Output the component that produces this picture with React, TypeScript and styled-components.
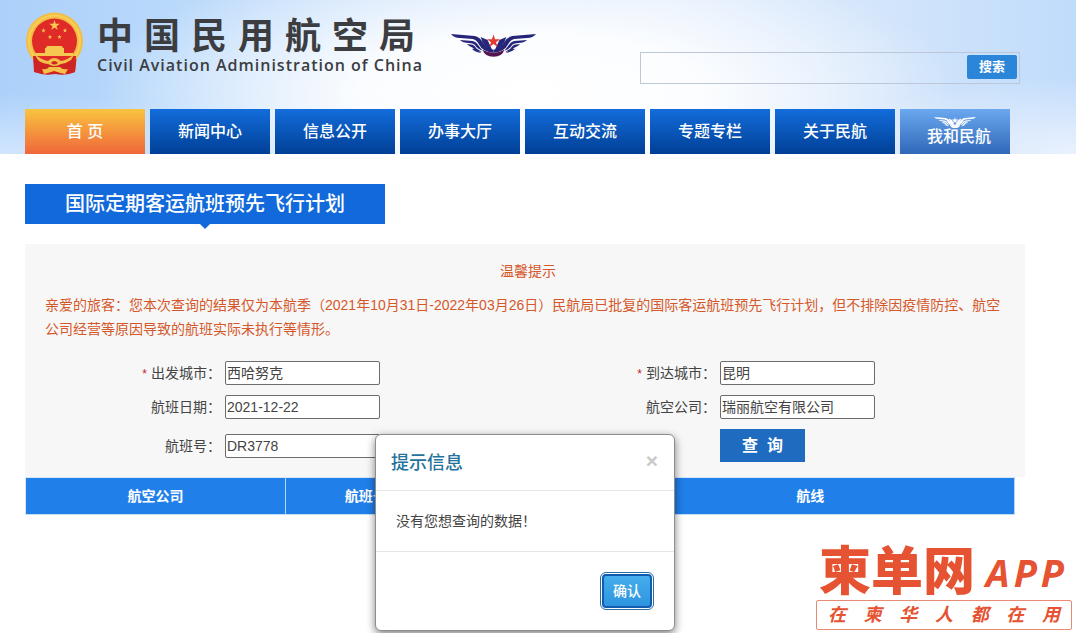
import React from 'react';
import styled, { createGlobalStyle } from 'styled-components';

const GlobalStyle = createGlobalStyle`
  *, *::before, *::after { box-sizing: border-box; }
  body {
    margin: 0;
    background: #fff;
    color: #444;
    font: 14px/24px "Liberation Sans", "Noto Sans CJK SC", sans-serif;
  }
  button, input { font: inherit; color: inherit; }
`;

const Page = styled.div`
  position: relative;
  min-height: 100vh;
  overflow: hidden;
`;

const Header = styled.header`
  padding: 12px 51px 0 25px;
  background:
    radial-gradient(ellipse 40% 95% at 49% 60%, #ffffff 0%, rgba(255, 255, 255, 0.9) 40%, rgba(255, 255, 255, 0) 100%),
    radial-gradient(ellipse 26% 40% at 0% 100%, rgba(225, 239, 255, 0.7), rgba(225, 239, 255, 0)),
    radial-gradient(ellipse 24% 50% at 100% 100%, rgba(238, 244, 254, 0.9), rgba(238, 244, 254, 0)),
    linear-gradient(90deg, #acd0fa 0%, #bbdafb 18%, #cfe3fc 38%, #dfecfd 62%, #d3e5fb 82%, #c0dcfb 100%);
`;

const Masthead = styled.div`
  display: flex;
  align-items: flex-start;
  height: 97px;
`;

const Emblem = styled.svg`
  flex: none;
  width: 60px;
  height: 64px;
`;

const Names = styled.div`
  flex: none;
  width: 322px;
  margin-left: 12px;
  color: #3c3d41;
  white-space: nowrap;
`;

const SiteName = styled.h1`
  display: flex;
  gap: 11px;
  margin: 6px 0 0;
  font-size: 36px;
  line-height: 38px;
  font-weight: 700;
`;

const EnglishName = styled.p`
  margin: 0;
  font: 600 16px/18px "Open Sans", sans-serif;
  letter-spacing: 1px;
`;

const Wings = styled.svg<{ $width: number }>`
  display: block;
  flex: none;
  width: ${p => p.$width}px;
`;

const WingsHolder = styled.div`
  margin: 22px 0 0 32px;
`;

const Search = styled.form`
  display: flex;
  width: 380px;
  height: 32px;
  margin: 40px 5px 0 auto;
  padding: 2px;
  border: 1px solid #bec7d8;
`;

const SearchInput = styled.input`
  flex: 1;
  min-width: 0;
  border: 0;
  background: transparent;
`;

const SearchButton = styled.button`
  width: 50px;
  height: 24px;
  padding: 0;
  border: 0;
  border-radius: 2px;
  background: #2b86d9;
  color: #fff;
  font-size: 13px;
  font-weight: 700;
`;

const Nav = styled.nav`
  display: grid;
  grid-template-columns: repeat(7, 12fr) 11fr;
  gap: 5px;
  margin-right: 15px;
`;

const tones = {
  home: 'linear-gradient(#f9c440, #f0663a)',
  normal: 'linear-gradient(#136ddb, #003f96)',
  light: 'linear-gradient(#6ba8ef, #3068b9)',
};

const NavLink = styled.a<{ $tone: keyof typeof tones }>`
  display: flex;
  flex-direction: column;
  align-items: center;
  justify-content: center;
  height: 45px;
  background: ${p => tones[p.$tone]};
  color: #fff;
  font-size: 16px;
  line-height: 18px;
  font-weight: 500;
  text-decoration: none;
  white-space: pre;
`;

const WingedLabel = styled.span`
  padding-left: 8px;
`;

const Main = styled.main`
  position: relative;
  margin: 30px 51px 0 25px;
`;

const Title = styled.h2`
  position: relative;
  width: fit-content;
  margin: 0 0 20px;
  padding: 0 40px;
  background: #1169db;
  color: #fff;
  font-size: 20px;
  line-height: 40px;
  font-weight: 500;

  &::after {
    content: "";
    position: absolute;
    top: 100%;
    left: 50%;
    margin-left: -5px;
    border: 5px solid transparent;
    border-top-color: #1169db;
    border-bottom: 0;
  }
`;

const Panel = styled.section`
  padding: 15px 0;
  background: #f7f7f7;
`;

const Notice = styled.div`
  padding: 0 20px;
  color: #d5582b;
`;

const NoticeTitle = styled.h3`
  margin: 0 0 10px;
  padding-left: 6px;
  font-size: 14px;
  font-weight: 400;
  text-align: center;
`;

const NoticeText = styled.p`
  margin: 0;
`;

const QueryForm = styled.form`
  display: grid;
  grid-template-columns: 1fr 1fr;
  row-gap: 10px;
  margin: 20px 10px 0 0;
`;

const Field = styled.div`
  display: flex;
  align-items: center;
`;

const Label = styled.label`
  width: 200px;
  padding-right: 4px;
  text-align: right;
`;

const Required = styled.span`
  margin-right: 4px;
  color: #c22222;
  font-size: 12px;
  line-height: 12px;
`;

const TextInput = styled.input`
  width: 155px;
  height: 24px;
  padding: 0 1px;
  border: 1px solid #6c6c6c;
  border-radius: 2px;
  background: #fff;
`;

const QueryButton = styled.button`
  width: 85px;
  height: 33px;
  margin-left: 200px;
  padding: 0;
  border: 0;
  background: #1e6bc0;
  color: #fff;
  font-size: 16px;
  font-weight: 700;
  white-space: pre;
`;

const Results = styled.table`
  width: calc(100% - 10px);
  border-collapse: collapse;
  table-layout: fixed;
  border: 1px solid #d5e6fa;
`;

const Th = styled.th<{ $width?: string }>`
  width: ${p => p.$width ?? 'auto'};
  height: 37px;
  padding: 0;
  border-right: 1px solid #b5d5fb;
  border-bottom: 1px solid #c5dcf8;
  background: #217fe9;
  color: #fff;
`;

const Dialog = styled.div`
  position: absolute;
  top: 250px;
  left: 50%;
  width: 300px;
  margin-left: -150px;
  border: 1px solid #8d8d8d;
  border-radius: 6px;
  background: #fff;
  box-shadow: 0 3px 9px rgba(0, 0, 0, 0.5);
`;

const DialogHeader = styled.div`
  display: flex;
  align-items: center;
  justify-content: space-between;
  height: 56px;
  padding: 0 16px 0 15px;
  border-bottom: 1px solid #e5e5e5;
`;

const DialogTitle = styled.h4`
  margin: 0;
  color: #25739c;
  font-size: 18px;
  font-weight: 500;
`;

const CloseButton = styled.button`
  padding: 0 0 4px;
  border: 0;
  background: none;
  color: #c9c9c9;
  font-size: 21px;
  line-height: 20px;
  font-weight: 700;
`;

const DialogBody = styled.p`
  margin: 0;
  padding: 18px 20px;
`;

const DialogFooter = styled.div`
  display: flex;
  justify-content: flex-end;
  padding: 22px;
  border-top: 1px solid #e5e5e5;
`;

const ConfirmButton = styled.button`
  width: 50px;
  height: 34px;
  padding: 0;
  border: 2px solid #125cb0;
  border-radius: 4px;
  outline: 1px solid #2a6ea8;
  outline-offset: 1px;
  background: linear-gradient(#45aeec, #2f94e0);
  color: #fff;
  font-weight: 500;
`;

const Brand = styled.aside`
  position: absolute;
  right: 4px;
  bottom: 3px;
  width: 256px;
  color: #e65332;
`;

const BrandName = styled.div`
  display: flex;
  align-items: center;
  justify-content: space-between;
  height: 56px;
  padding: 0 8px 0 3px;
  font-size: 52px;
  font-weight: 900;
  line-height: 56px;
`;

const BrandSuffix = styled.span`
  display: flex;
  gap: 4px;
  font: italic 700 38px/56px "Open Sans", sans-serif;
`;

const BrandSlogan = styled.div`
  display: flex;
  justify-content: space-between;
  padding: 0 11px;
  border: 1px solid #e98a74;
  border-radius: 2px;
  font-size: 18px;
  line-height: 28px;
  font-weight: 700;
  font-style: italic;
`;

const STAR = '0,-1 .225,-.31 .951,-.309 .363,.118 .588,.809 0,.382 -.588,.809 -.363,.118 -.951,-.309 -.225,-.31';

function WingsMark({ width, color, accent, base }: { width: number; color: string; accent: string; base: string }) {
  const wing = (
    <>
      <path d="M0 0 L24 2 Q29 3 32 8 Q36 15 43 16 V19 Q32 18 28 10 Q26 6 22 5 L9 4 Q3 4 0 0Z" />
      <path d="M9 6 L22 7 Q26 8 28 12 L32 17 Q26 15 24 11 Q22 9 18 9 Q12 9 9 6Z" />
      <path d="M16 10 L22 11 Q24 12 26 15 L31 18 Q25 18 22 14 Q19 13 16 10Z" />
      <path d="M21 15 Q25 15 27 17 L31 19 Q25 19 21 15Z" />
      <path d="M30 3 L37 6 L42 17 Q33 14 30 3Z" />
    </>
  );
  return (
    <Wings $width={width} viewBox="0 0 86 23" aria-hidden="true">
      <g fill={color}>
        {wing}
        <g transform="translate(86 0) scale(-1 1)">{wing}</g>
      </g>
      <path d="M32 16 Q37 19 43 19 T54 16 Q52 23 43 23 T32 16Z" fill={base} />
      <polygon points={STAR} transform="translate(43 7.500) scale(7)" fill={accent} />
    </Wings>
  );
}

function NationalEmblem() {
  return (
    <Emblem viewBox="0 0 60 64" role="img" aria-label="国徽">
      <path d="M8 43 L52 43 L50 60 Q42 64 30 62 Q18 64 10 60Z" fill="#cf2424" />
      <circle cx="29.500" cy="29" r="28.500" fill="#f4bd46" />
      <circle cx="29.500" cy="29" r="25.500" fill="none" stroke="#f8cf56" strokeWidth="2" />
      <circle cx="29.500" cy="29" r="22.500" fill="#df2a28" />
      <g fill="#f7c850">
        <polygon points={STAR} transform="translate(29.500 13.500) scale(5.500)" />
        <polygon points={STAR} transform="translate(18.500 18.500) scale(2.400)" />
        <polygon points={STAR} transform="translate(40 18.500) scale(2.400)" />
        <polygon points={STAR} transform="translate(25 25) scale(2.400)" />
        <polygon points={STAR} transform="translate(34.500 25) scale(2.400)" />
        <path d="M22 34 H37 L38 36 H21Z M20 36 H39 V41 H48 V44 H10 V41 H20Z" />
      </g>
      <path d="M8 44 H12 Q18 52 29 52 T47 44 H51 L50 60 Q43 62 37 57 L29 56 L22 57 Q16 62 9 60Z" fill="#cf2424" />
      <path d="M10 43 Q17 48 23 49 Q29 43 36 49 Q42 48 49 43 L46 48 Q42 51 36 52 Q29 56 23 52 Q16 51 13 48Z" fill="#f5c04a" />
      <path d="M17 57 Q22 58 24 55 H35 Q37 58 43 57 L40 62 Q35 61 29 59 Q23 61 19 62Z" fill="#f5c04a" />
      <path d="M26 51 Q29 47 33 51 Q29 54 26 51Z" fill="#cf2424" />
    </Emblem>
  );
}

const spread = (text: string) => [...text].map((char, i) => <span key={i}>{char}</span>);

const navItems = ['新闻中心', '信息公开', '办事大厅', '互动交流', '专题专栏', '关于民航'];

const fields = [
  { id: 'from', label: '出发城市：', value: '西哈努克', required: true },
  { id: 'to', label: '到达城市：', value: '昆明', required: true },
  { id: 'date', label: '航班日期：', value: '2021-12-22' },
  { id: 'airline', label: '航空公司：', value: '瑞丽航空有限公司' },
  { id: 'flight', label: '航班号：', value: 'DR3778' },
];

export default function App() {
  return (
    <Page>
      <GlobalStyle />
      <Header>
        <Masthead>
          <NationalEmblem />
          <Names>
            <SiteName>{spread('中国民用航空局')}</SiteName>
            <EnglishName>Civil Aviation Administration of China</EnglishName>
          </Names>
          <WingsHolder>
            <WingsMark width={85} color="#262579" accent="#e33a31" base="#55164f" />
          </WingsHolder>
          <Search onSubmit={e => e.preventDefault()}>
            <SearchInput type="text" aria-label="搜索" />
            <SearchButton type="submit">搜索</SearchButton>
          </Search>
        </Masthead>
        <Nav>
          <NavLink href="#" $tone="home">首 页</NavLink>
          {navItems.map(item => (
            <NavLink key={item} href="#" $tone="normal">{item}</NavLink>
          ))}
          <NavLink href="#" $tone="light">
            <WingsMark width={42} color="#fff" accent="#fff" base="#fff" />
            <WingedLabel>我和民航</WingedLabel>
          </NavLink>
        </Nav>
      </Header>

      <Main>
        <Title>国际定期客运航班预先飞行计划</Title>
        <Panel>
          <Notice>
            <NoticeTitle>温馨提示</NoticeTitle>
            <NoticeText>
              亲爱的旅客：您本次查询的结果仅为本航季（2021年10月31日-2022年03月26日）民航局已批复的国际客运航班预先飞行计划，但不排除因疫情防控、航空公司经营等原因导致的航班实际未执行等情形。
            </NoticeText>
          </Notice>
          <QueryForm onSubmit={e => e.preventDefault()}>
            {fields.map(field => (
              <Field key={field.id}>
                <Label htmlFor={field.id}>
                  {field.required && <Required>*</Required>}
                  {field.label}
                </Label>
                <TextInput id={field.id} type="text" defaultValue={field.value} />
              </Field>
            ))}
            <Field>
              <QueryButton type="submit">查  询</QueryButton>
            </Field>
          </QueryForm>
        </Panel>
        <Results>
          <thead>
            <tr>
              <Th $width="26.3%">航空公司</Th>
              <Th $width="16.2%">航班号</Th>
              <Th $width="16.2%" />
              <Th>航线</Th>
            </tr>
          </thead>
        </Results>

        <Dialog role="dialog" aria-labelledby="dialog-title">
          <DialogHeader>
            <DialogTitle id="dialog-title">提示信息</DialogTitle>
            <CloseButton type="button" aria-label="关闭">×</CloseButton>
          </DialogHeader>
          <DialogBody>没有您想查询的数据！</DialogBody>
          <DialogFooter>
            <ConfirmButton type="button">确认</ConfirmButton>
          </DialogFooter>
        </Dialog>
      </Main>

      <Brand>
        <BrandName>
          柬单网
          <BrandSuffix>{spread('APP')}</BrandSuffix>
        </BrandName>
        <BrandSlogan>{spread('在柬华人都在用')}</BrandSlogan>
      </Brand>
    </Page>
  );
}
